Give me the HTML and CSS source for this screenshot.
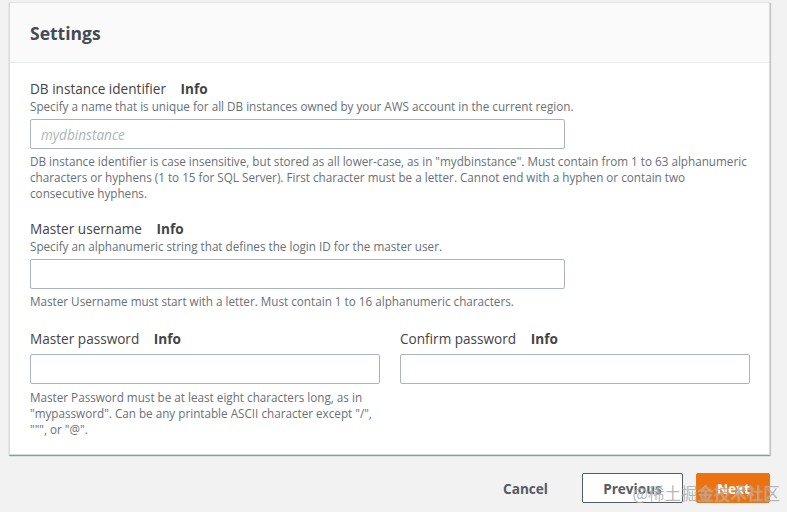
FILE: index.html
```html
<!DOCTYPE html>
<html lang="en">
<head>
<meta charset="utf-8">
<title>Settings</title>
<link rel="stylesheet" href="styles.css">
</head>
<body>
<div class="page">
  <section class="card">
    <header class="card-header"><h2>Settings</h2></header>
    <div class="card-body">
      <div class="field">
        <div class="label">DB instance identifier <span class="info">Info</span></div>
        <div class="desc">Specify a name that is unique for all DB instances owned by your AWS account in the current region.</div>
        <div class="input wide"><span class="placeholder">mydbinstance</span></div>
        <div class="constraint">DB instance identifier is case insensitive, but stored as all lower-case, as in "mydbinstance". Must contain from 1 to 63 alphanumeric characters or hyphens (1 to 15 for SQL Server). First character must be a letter. Cannot end with a hyphen or contain two consecutive hyphens.</div>
      </div>
      <div class="field">
        <div class="label">Master username <span class="info">Info</span></div>
        <div class="desc">Specify an alphanumeric string that defines the login ID for the master user.</div>
        <div class="input wide"></div>
        <div class="constraint">Master Username must start with a letter. Must contain 1 to 16 alphanumeric characters.</div>
      </div>
      <div class="field-row">
        <div class="field">
          <div class="label">Master password <span class="info">Info</span></div>
          <div class="input tall-gap"></div>
          <div class="constraint">Master Password must be at least eight characters long, as in "mypassword". Can be any printable ASCII character except "/", """, or "@".</div>
        </div>
        <div class="field">
          <div class="label">Confirm password <span class="info">Info</span></div>
          <div class="input tall-gap"></div>
        </div>
      </div>
    </div>
  </section>
  <div class="actions">
    <button class="btn link">Cancel</button>
    <button class="btn normal">Previous</button>
    <button class="btn primary">Next</button>
  </div>
  <div class="watermark">@稀土掘金技术社区</div>
</div>
</body>
</html>
```
FILE: styles.css
```css
* { box-sizing: border-box; }
html, body { margin: 0; padding: 0; }
body {
  background: #f2f2f2;
  font-family: "Open Sans", "Noto Sans CJK SC", sans-serif;
  color: #16191f;
  width: 787px;
  height: 512px;
  overflow: hidden;
}
.page {
  position: relative;
  padding: 2px 17px 0 9px;
  height: 512px;
}
.card {
  background: #fff;
  border: 1px solid #d5dbdb;
  border-top-color: #e4e4e4;
  box-shadow: 0 1px 1px 0 rgba(0,28,36,0.3), 1px 1px 1px 0 rgba(0,28,36,0.15);
}
.card-header {
  background: #fafafa;
  border-bottom: 1px solid #eaeded;
  height: 60px;
  display: flex;
  align-items: center;
  padding: 0 20px;
}
.card-header h2 {
  margin: 0;
  font-size: 17.5px;
  font-weight: 700;
  color: #444b54;
}
.card-body {
  padding: 17px 20px 17px 20px;
  display: flex;
  flex-direction: column;
  gap: 19px;
}
.field-row {
  display: grid;
  grid-template-columns: 350px 350px;
  column-gap: 20px;
  margin-top: 2px;
}
.label {
  font-size: 13.6px;
  line-height: 18px;
  color: #444;
}
.info {
  font-weight: 700;
  margin-left: 11px;
  color: #444;
}
.desc {
  font-size: 11.7px;
  line-height: 16px;
  color: #687078;
}
.input {
  margin-top: 5px;
  height: 30px;
  border: 1px solid #aab7b8;
  border-radius: 2px;
  background: #fff;
  display: flex;
  align-items: center;
  padding: 0 10px;
}
.input.tall-gap { margin-top: 6px; }
.input.wide { width: 535px; }
.placeholder {
  font-size: 13.6px;
  font-style: italic;
  color: #aab7b8;
}
.constraint {
  margin-top: 4px;
  font-size: 11.7px;
  line-height: 16px;
  color: #687078;
}
.field-row .constraint { margin-top: 5px; }
.actions {
  display: flex;
  justify-content: flex-end;
  align-items: center;
  gap: 13px;
  margin-top: 18px;
}
.btn {
  font-family: inherit;
  font-size: 13.6px;
  font-weight: 700;
  height: 30px;
  border-radius: 2px;
  padding: 0 20px;
  cursor: pointer;
}
.btn.link {
  background: transparent;
  border: 1px solid transparent;
  color: #545b64;
}
.btn.normal {
  background: #fff;
  border: 1px solid #545b64;
  color: #545b64;
  width: 101px;
}
.btn.primary {
  background: #ec7211;
  border: 1px solid #ec7211;
  color: #fff;
  width: 74px;
}
.watermark {
  position: absolute;
  right: 7px;
  top: 481px;
  font-size: 16.5px;
  color: rgba(120,120,120,0.55);
  font-family: "Noto Sans CJK SC", sans-serif;
  text-shadow: 0 0 1px rgba(255,255,255,0.8);
  pointer-events: none;
}
```
